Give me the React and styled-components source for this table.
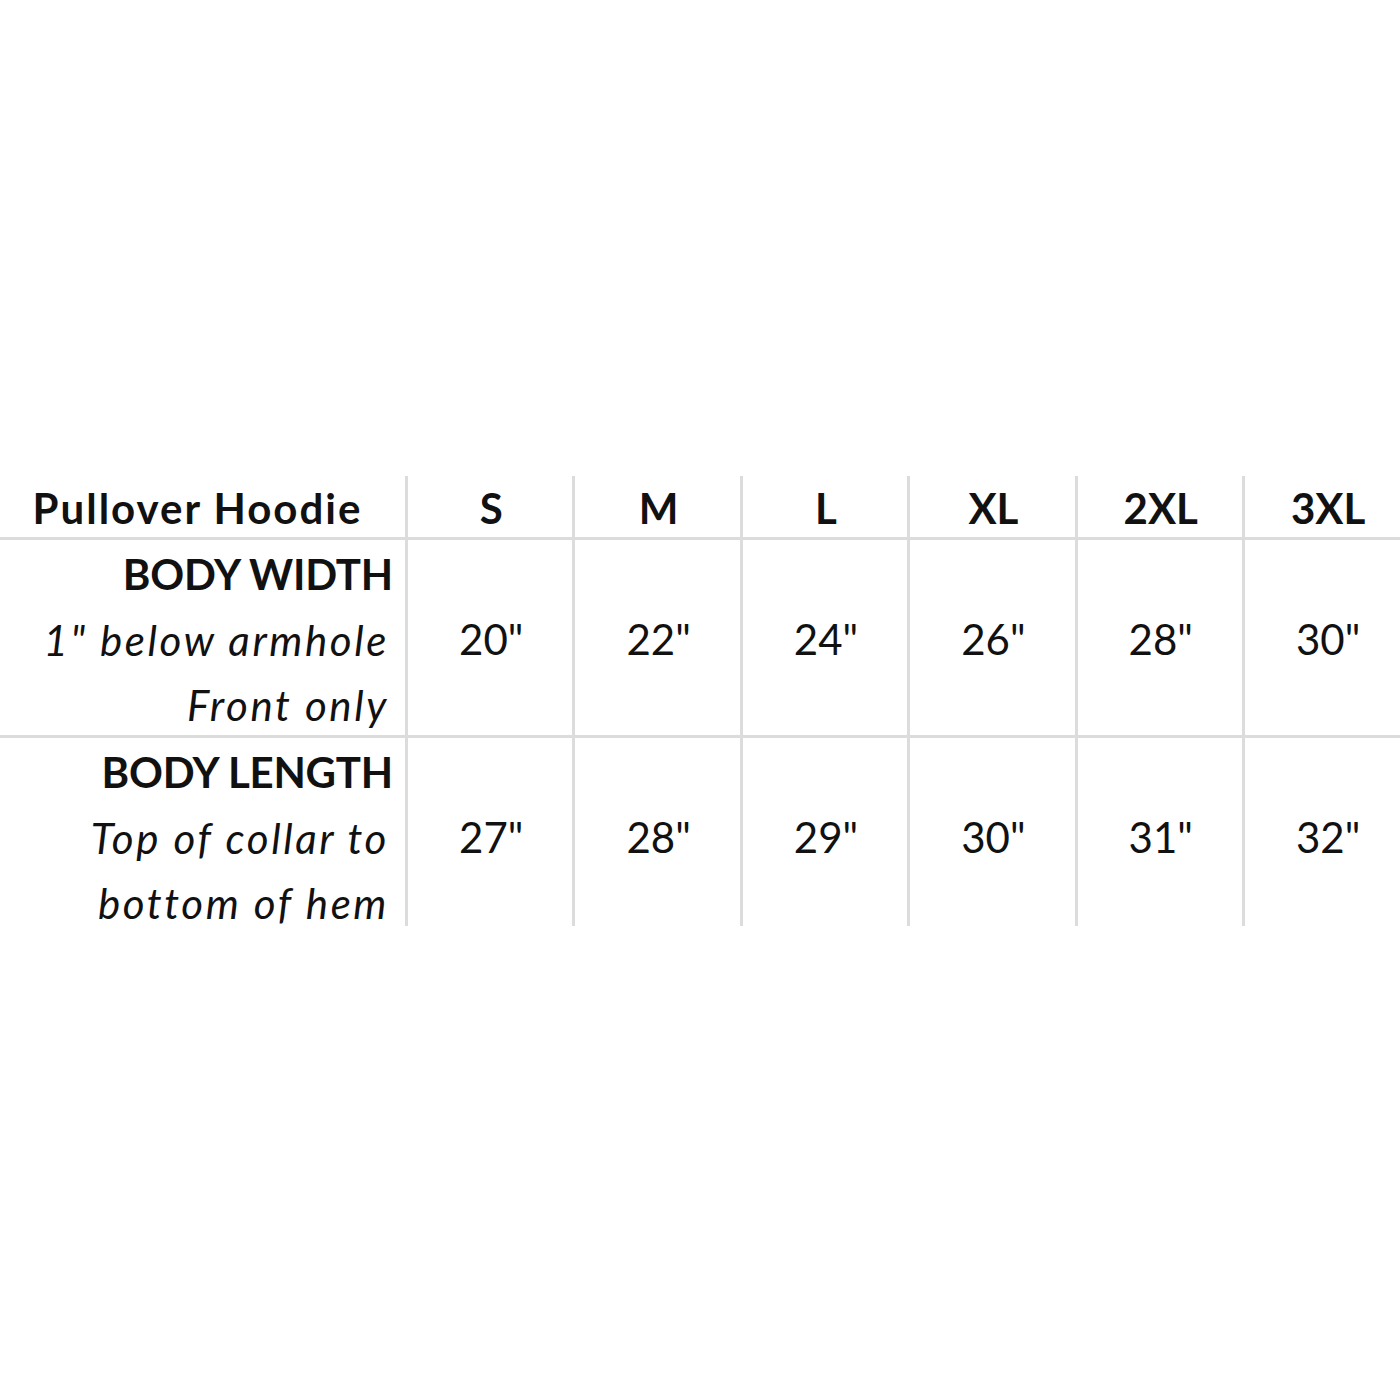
import styled, { createGlobalStyle } from "styled-components";

const GlobalStyle = createGlobalStyle`
  html, body {
    margin: 0;
    padding: 0;
    background: #fff;
  }
  body {
    font-family: Lato, "Open Sans", "Liberation Sans", sans-serif;
    color: #111;
  }
`;

const Page = styled.div`
  width: 1400px;
  height: 1400px;
  overflow: hidden;
  display: flex;
  align-items: flex-start;
  padding-top: 476px;
  box-sizing: border-box;
`;

const Chart = styled.div`
  width: 1410px;
  display: flex;
  flex-direction: column;
`;

const Row = styled.div`
  display: grid;
  grid-template-columns: 405px repeat(6, 167.4px);
  grid-template-rows: 100%;
  height: ${(p) => p.$height}px;
  border-bottom: ${(p) => (p.$last ? "none" : "3px solid #dcdcdc")};
  box-sizing: border-box;
`;

const LabelCell = styled.div`
  min-height: 0;
  display: flex;
  flex-direction: column;
  align-items: flex-end;
  justify-content: flex-start;
  padding-right: 12px;
  padding-top: 2px;
`;

const HeaderCell = styled.div`
  display: flex;
  align-items: center;
  justify-content: center;
  padding-right: 10px;
  padding-top: 3px;
`;

const SizeCell = styled.div`
  min-height: 0;
  border-left: 3px solid #dcdcdc;
  display: flex;
  align-items: center;
  justify-content: center;
  box-sizing: border-box;
  padding-top: ${(p) => p.$top || 0}px;
`;

const Title = styled.span`
  font-weight: 700;
  font-size: 42px;
  line-height: 64px;
  letter-spacing: 2px;
`;

const SizeName = styled.span`
  font-weight: 700;
  font-size: 42px;
  line-height: 64px;
  padding-left: 2px;
`;

const Heading = styled.span`
  font-weight: 700;
  font-size: 42px;
  line-height: 65.5px;
  letter-spacing: -0.2px;
`;

const Note = styled.span`
  font-style: italic;
  font-size: 42px;
  line-height: 65.5px;
  letter-spacing: 2.6px;
  padding-right: 4px;
`;

const Value = styled.span`
  font-size: 42px;
  line-height: 65.5px;
  padding-left: 2px;
`;

const sizes = ["S", "M", "L", "XL", "2XL", "3XL"];

const measures = [
  {
    heading: "BODY WIDTH",
    notes: ['1" below armhole', "Front only"],
    values: ['20"', '22"', '24"', '26"', '28"', '30"'],
    height: 198,
    shift: 4,
  },
  {
    heading: "BODY LENGTH",
    notes: ["Top of collar to", "bottom of hem"],
    values: ['27"', '28"', '29"', '30"', '31"', '32"'],
    height: 188,
    shift: 12,
  },
];

export default function App() {
  return (
    <>
      <GlobalStyle />
      <Page>
        <Chart>
          <Row $height={64}>
            <HeaderCell>
              <Title>Pullover Hoodie</Title>
            </HeaderCell>
            {sizes.map((s) => (
              <SizeCell key={s} $top={3}>
                <SizeName>{s}</SizeName>
              </SizeCell>
            ))}
          </Row>
          {measures.map((m, i) => (
            <Row key={m.heading} $height={m.height} $last={i === measures.length - 1}>
              <LabelCell>
                <Heading>{m.heading}</Heading>
                {m.notes.map((n) => (
                  <Note key={n}>{n}</Note>
                ))}
              </LabelCell>
              {m.values.map((v, j) => (
                <SizeCell key={j} $top={m.shift}>
                  <Value>{v}</Value>
                </SizeCell>
              ))}
            </Row>
          ))}
        </Chart>
      </Page>
    </>
  );
}
